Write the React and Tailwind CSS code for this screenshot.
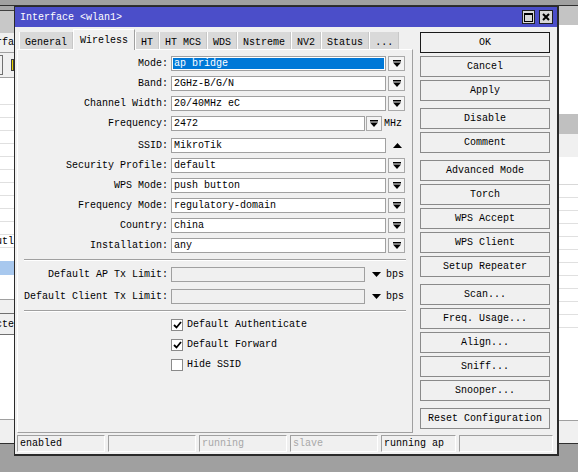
import React from "react";

const mono = "font-['Liberation_Mono','DejaVu_Sans_Mono',monospace]";

function DropIcon() {
  return (
    <svg width="8" height="7" viewBox="0 0 8 7">
      <rect x="0" y="0" width="8" height="1.5" fill="#000" />
      <polygon points="0,2.5 8,2.5 4,7" fill="#000" />
    </svg>
  );
}

function Tri({ up }) {
  return (
    <svg width="9" height="5" viewBox="0 0 9 5">
      {up ? <polygon points="0,5 9,5 4.5,0" fill="#000" /> : <polygon points="0,0 9,0 4.5,5" fill="#000" />}
    </svg>
  );
}

function DropBtn({ w = "w-[17px]" }) {
  return (
    <div className={`${w} h-[15px] border border-[#a9a9a9] bg-[#f4f4f4] flex items-center justify-center`}>
      <DropIcon />
    </div>
  );
}

function Row({ label, value, selected, kind = "drop", mt = "mt-[5px]" }) {
  return (
    <div className={`flex items-center h-[15px] ${mt}`}>
      <div className="w-[150px] text-right whitespace-nowrap">{label}</div>
      {kind === "freq" ? (
        <>
          <div className="ml-[3px] w-[194px] h-[15px] border border-[#a0a0a0] bg-white pl-[2px] leading-[13px]">{value}</div>
          <div className="ml-[1px]"><DropBtn w="w-[16px]" /></div>
          <div className="ml-[2px]">MHz</div>
        </>
      ) : kind === "tx" ? (
        <>
          <div className="ml-[3px] w-[194px] h-[15px] border border-[#a0a0a0] bg-[#f0f0f0]" />
          <div className="ml-[7px] flex items-center"><Tri /></div>
          <div className="ml-[5px]">bps</div>
        </>
      ) : (
        <>
          <div className={`ml-[3px] w-[215px] h-[15px] border border-[#a0a0a0] bg-white ${selected ? "p-px" : "pl-[2px]"} leading-[13px]`}>
            {selected ? (
              <div className="h-full bg-[#0078d7] text-white pl-px leading-[11px]">{value}</div>
            ) : (
              value
            )}
          </div>
          {kind === "up" ? (
            <div className="ml-[7px] flex items-center"><Tri up /></div>
          ) : (
            <div className="ml-[2px]"><DropBtn /></div>
          )}
        </>
      )}
    </div>
  );
}

function Check({ label, checked, mt }) {
  return (
    <div className={`flex items-center h-[13px] ${mt}`}>
      <div className="ml-[153px] w-[12px] h-[12px] border border-[#8a8a8a] bg-white flex items-center justify-center">
        {checked && (
          <svg width="9" height="8" viewBox="0 0 9 8">
            <polyline points="1,4 3.5,6.5 8,1" fill="none" stroke="#000" strokeWidth="1.8" />
          </svg>
        )}
      </div>
      <div className="ml-[4px]">{label}</div>
    </div>
  );
}

function Sep({ mt }) {
  return <div className={`${mt} ml-[6px] mr-[6px] h-[2px] border-t border-[#a0a0a0] border-b border-b-white`} />;
}

const tabs = ["General", "Wireless", "HT", "HT MCS", "WDS", "Nstreme", "NV2", "Status", "..."];

const groups = [
  ["OK", "Cancel", "Apply"],
  ["Disable", "Comment"],
  ["Advanced Mode", "Torch", "WPS Accept", "WPS Client", "Setup Repeater"],
  ["Scan...", "Freq. Usage...", "Align...", "Sniff...", "Snooper..."],
  ["Reset Configuration"],
];

function BackWindow() {
  const rows = Array.from({ length: 11 });
  return (
    <div className="absolute left-0 top-[5px] w-[578px] h-[439px] border-t border-b border-[#303030] flex justify-between">
      {/* left part of the window behind */}
      <div className="w-[14px] flex flex-col">
        <div className="h-[4px] bg-[#a8a8a8]" />
        <div className="h-[23px] bg-[#c8c8c8] border-t border-[#404040]" />
        <div className="h-[19px] bg-[#f0f0f0] flex items-center justify-end overflow-hidden whitespace-nowrap">rfa</div>
        <div className="h-[26px] bg-[#f0f0f0] border-t border-b border-[#a0a0a0] flex items-center">
          <div className="w-[3px] h-[20px] border-r border-t border-b border-[#707070]" />
          <div className="ml-[8px] w-[3px] h-[12px] bg-[#e8d200] border border-[#404040]" />
        </div>
        <div className="h-[27px] bg-white border-b border-[#e0e0e0]" />
        {Array.from({ length: 10 }).map((_, i) => (
          <div key={i} className="h-[13px] bg-white border-b border-[#e0e0e0]" />
        ))}
        <div className="h-[13px] bg-white border-b border-[#e0e0e0] flex items-center justify-end overflow-hidden whitespace-nowrap">utl</div>
        <div className="h-[13px] bg-white" />
        <div className="h-[14px] bg-[#a8c8ee]" />
        <div className="h-[24px] bg-white" />
        <div className="h-[14px] bg-[#f0f0f0] border-t border-[#a0a0a0]" />
        <div className="h-[22px] bg-[#f0f0f0] border-t border-b border-[#707070] flex items-center justify-end overflow-hidden whitespace-nowrap">cte</div>
        <div className="h-[84px] bg-white" />
        <div className="flex-1 bg-[#f0f0f0] border-t border-[#a0a0a0]" />
      </div>
      {/* right part of the window behind */}
      <div className="w-[19px] flex flex-col">
        <div className="h-[19px] bg-[#c4c4c4]" />
        <div className="h-[89px] bg-white" />
        <div className="h-[20px] bg-[#c0c0c0]" />
        <div className="h-[23px] bg-[#f0f0f0]" />
        <div className="h-[28px] bg-white border-b border-[#d8d8d8]" />
        {rows.map((_, i) => (
          <div key={i} className="h-[13px] bg-white border-b border-[#e0e0e0]" />
        ))}
        <div className="h-[92px] bg-white" />
        <div className="flex-1 bg-[#f0f0f0] border-t border-[#a0a0a0]" />
      </div>
    </div>
  );
}

export default function App() {
  return (
    <div className={`relative w-[578px] h-[472px] overflow-hidden bg-[#a0a0a0] text-[10px] text-black ${mono}`}>
      <BackWindow />

      <div className="absolute left-[14px] top-[6px] w-[545px] h-[450px] border-l border-t border-r-2 border-b-2 border-[#2a2a2a] bg-[#f0f0f0] flex flex-col">
        {/* title bar */}
        <div className="h-[20px] bg-[#4b4ec9] flex items-center pl-[5px] pr-[4px]">
          <div className="text-white flex-1">Interface &lt;wlan1&gt;</div>
          <div className="w-[13px] h-[14px] border border-[#202020] bg-[#d8d8d8] flex items-center justify-center">
            <div className="w-[9px] h-[9px] border border-black border-t-2" />
          </div>
          <div className="ml-[4px] w-[14px] h-[14px] border border-[#202020] bg-[#d8d8d8] flex items-center justify-center">
            <svg width="8" height="8" viewBox="0 0 8 8">
              <path d="M1 1 L7 7 M7 1 L1 7" stroke="#000" strokeWidth="2" />
            </svg>
          </div>
        </div>

        {/* body */}
        <div className="flex">
          <div className="pl-[2px] flex flex-col">
            <div className="h-[22px] flex items-end pl-[2px]">
              {tabs.map((t) => {
                const active = t === "Wireless";
                return (
                  <div
                    key={t}
                    className={
                      active
                        ? "relative z-10 h-[21px] -mb-px px-[6px] bg-[#f0f0f0] border-l border-t border-white border-r border-r-[#a0a0a0] pt-[3px]"
                        : "h-[17px] px-[5px] bg-[#d9d9d9] border-l border-white border-r border-r-[#c8c8c8] pt-[3px]"
                    }
                  >
                    {t}
                  </div>
                );
              })}
            </div>
            <div className="w-[396px] h-[384px] border border-t-white border-l-white border-r-[#a0a0a0] border-b-[#a0a0a0] pt-[6px]">
              <Row label="Mode:" value="ap bridge" selected mt="" />
              <Row label="Band:" value="2GHz-B/G/N" />
              <Row label="Channel Width:" value="20/40MHz eC" />
              <Row label="Frequency:" value="2472" kind="freq" />
              <Row label="SSID:" value="MikroTik" kind="up" mt="mt-[7px]" />
              <Row label="Security Profile:" value="default" />
              <Row label="WPS Mode:" value="push button" />
              <Row label="Frequency Mode:" value="regulatory-domain" />
              <Row label="Country:" value="china" />
              <Row label="Installation:" value="any" />
              <Sep mt="mt-[6px]" />
              <Row label="Default AP Tx Limit:" kind="tx" mt="mt-[6px]" />
              <div className="flex items-center h-[15px] mt-[7px]">
                <div className="ml-[6px] whitespace-nowrap w-[144px] text-right">Default Client Tx Limit:</div>
                <div className="ml-[3px] w-[194px] h-[15px] border border-[#a0a0a0] bg-[#f0f0f0]" />
                <div className="ml-[7px] flex items-center"><Tri /></div>
                <div className="ml-[5px]">bps</div>
              </div>
              <Sep mt="mt-[6px]" />
              <Check label="Default Authenticate" checked mt="mt-[6px]" />
              <Check label="Default Forward" checked mt="mt-[7px]" />
              <Check label="Hide SSID" mt="mt-[7px]" />
            </div>
          </div>

          <div className="ml-[7px] pt-[5px] w-[130px] flex flex-col gap-[7px]">
            {groups.map((g, gi) => (
              <div key={gi} className="flex flex-col gap-[3px]">
                {g.map((b) => (
                  <div
                    key={b}
                    className={`h-[21px] flex items-center justify-center bg-[#f0f0f0] border ${b === "OK" ? "border-[#1a1a1a]" : "border-[#8a8a8a]"}`}
                  >
                    {b}
                  </div>
                ))}
              </div>
            ))}
          </div>
        </div>

        {/* status bar */}
        <div className="mt-[2px] pl-[2px] flex gap-[3px] h-[17px]">
          {[
            ["enabled", "w-[88px]", "text-black"],
            ["", "w-[88px]", "text-black"],
            ["running", "w-[88px]", "text-[#a8a8a8]"],
            ["slave", "w-[88px]", "text-[#a8a8a8]"],
            ["running ap", "w-[75px]", "text-black"],
            ["", "w-[94px]", "text-black"],
          ].map(([t, w, c], i) => (
            <div key={i} className={`${w} ${c} h-[17px] border-l border-t border-[#a0a0a0] border-r border-b border-r-white border-b-white pl-[2px] leading-[15px] whitespace-nowrap overflow-hidden`}>
              {t}
            </div>
          ))}
        </div>
      </div>
    </div>
  );
}
